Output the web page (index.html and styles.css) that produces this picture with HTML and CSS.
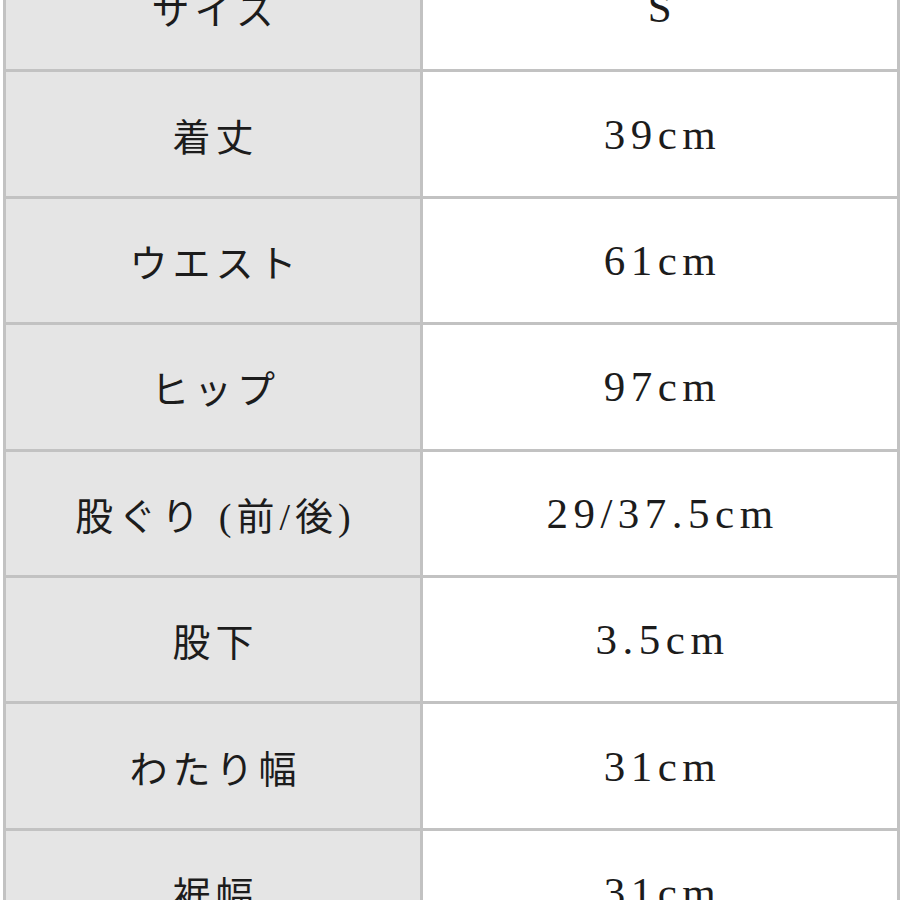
FILE: index.html
```html
<!DOCTYPE html>
<html lang="ja">
<head>
<meta charset="utf-8">
<title>サイズ表</title>
<link rel="stylesheet" href="styles.css">
</head>
<body>
<div class="sheet">
  <div class="row"><div class="key">サイズ</div><div class="val">S</div></div>
  <div class="row"><div class="key">着丈</div><div class="val">39cm</div></div>
  <div class="row"><div class="key">ウエスト</div><div class="val">61cm</div></div>
  <div class="row"><div class="key">ヒップ</div><div class="val">97cm</div></div>
  <div class="row"><div class="key">股ぐり (前/後)</div><div class="val">29/37.5cm</div></div>
  <div class="row"><div class="key">股下</div><div class="val">3.5cm</div></div>
  <div class="row"><div class="key">わたり幅</div><div class="val">31cm</div></div>
  <div class="row"><div class="key">裾幅</div><div class="val">31cm</div></div>
</div>
</body>
</html>
```
FILE: styles.css
```css
html, body {
  margin: 0;
  padding: 0;
  background: #ffffff;
  overflow: hidden;
}
.sheet {
  margin-top: -54px;
  margin-left: 3px;
  width: 891px;
  border-left: 3px solid #c2c2c2;
  border-right: 3px solid #c2c2c2;
}
.row {
  display: grid;
  grid-template-columns: 417px 1fr;
  height: 123.4px;
  border-bottom: 3px solid #c2c2c2;
}
.key {
  background: #e5e5e5;
  border-right: 3px solid #c2c2c2;
  display: flex;
  align-items: center;
  justify-content: center;
  font-family: "Liberation Serif", "Noto Sans CJK JP", serif;
  font-size: 38px;
  letter-spacing: 5px;
  padding-left: 5px;
  color: #1c1c1c;
  white-space: nowrap;
}
.val {
  background: #ffffff;
  display: flex;
  align-items: center;
  justify-content: center;
  font-family: "Liberation Serif", "Noto Sans CJK JP", serif;
  font-size: 43px;
  letter-spacing: 5.5px;
  padding-left: 5px;
  color: #1c1c1c;
  white-space: nowrap;
}
```
